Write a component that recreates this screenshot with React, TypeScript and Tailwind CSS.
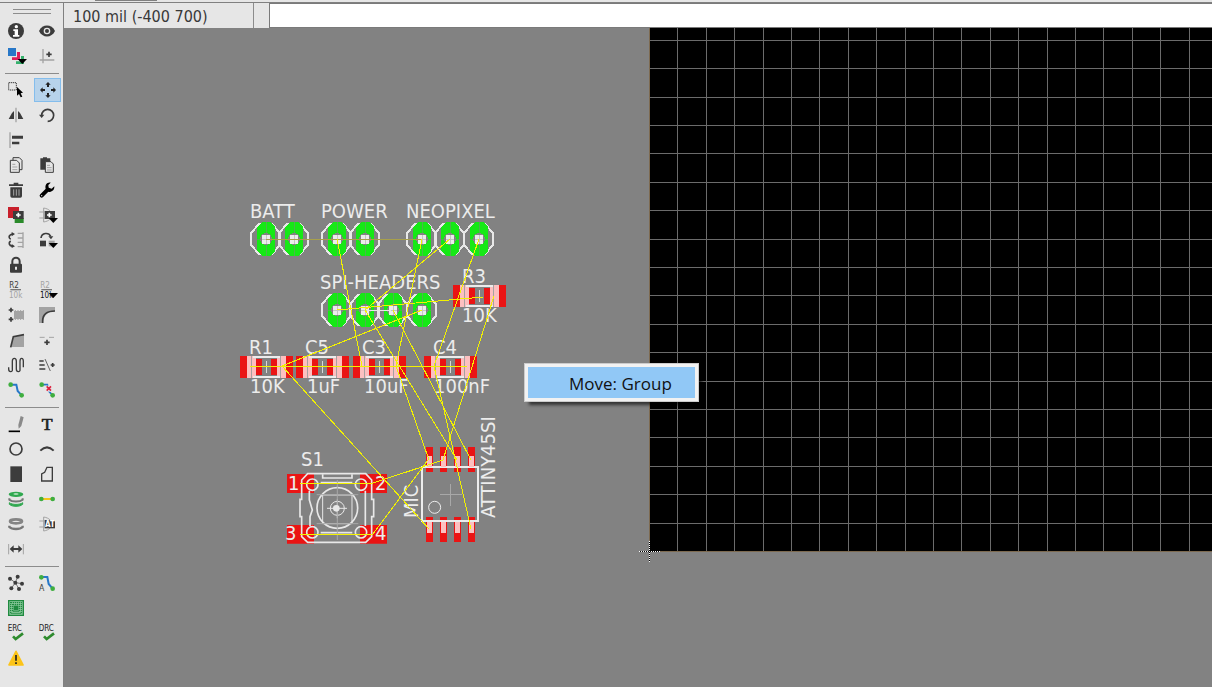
import React from "react";

type Tool = { name: string; art: React.ReactNode; active?: boolean };

const ink = "#3c3c3c";
const pale = "#a3a3a3";
const green = "#3fae3f";
const blue = "#2878c8";

const Plus = ({ x, y, s = 7, c = ink }: { x: number; y: number; s?: number; c?: string }) => (
  <path d={`M${x - s} ${y}h${s * 2}M${x} ${y - s}v${s * 2}`} stroke={c} strokeWidth="5" />
);
const Drop = () => <path d="M29 33H57L43 48Z" fill="#000" />;

const Gate = () => (
  <path d="M1 15H16M1 33H16M14 3V45M14 3C32 6 38 15 38 24S32 42 14 45" fill="none" stroke={pale} strokeWidth="3" />
);

const groupOne: Tool[] = [
  {
    name: "Info",
    art: (
      <>
        <circle cx="24" cy="24" r="24" fill={ink} />
        <circle cx="25" cy="11" r="5" fill="#fff" />
        <path d="M16 19H30V36H34V41H15V36H20V24H16Z" fill="#fff" />
      </>
    ),
  },
  {
    name: "Show",
    art: (
      <>
        <path d="M0 24C10 2 38 2 48 24C38 46 10 46 0 24Z" fill={ink} />
        <circle cx="24" cy="24" r="8" fill={ink} stroke="#e6e6e6" strokeWidth="4" />
      </>
    ),
  },
  {
    name: "Layers",
    art: (
      <>
        <path d="M0 0H24V24H0Z" fill={blue} />
        <path d="M27 12H36V36H12V28H27Z" fill="#dc1e5a" />
        <path d="M39 24H48V48H24V40H39Z" fill="#35b06c" />
        <Drop />
      </>
    ),
  },
  {
    name: "Mark",
    art: (
      <>
        <path d="M12 3V46M2 36H46" stroke={pale} strokeWidth="4" />
        <Plus x={30} y={19} s={8} />
      </>
    ),
  },
];

const groupTwo: (Tool | null)[] = [
  {
    name: "Group",
    art: (
      <>
        <path d="M2 2H25V24H2Z" fill="none" stroke={ink} strokeWidth="3" strokeDasharray="4 2" />
        <path d="M27 15L45 32L38 34L43 44L38 46L33 36L27 41Z" fill="#000" />
      </>
    ),
  },
  {
    name: "Move",
    active: true,
    art: (
      <g fill="#222">
        <path d="M24 0L32 8H27V15H21V8H16Z" />
        <path d="M24 48L32 40H27V33H21V40H16Z" />
        <path d="M0 24L8 16V21H15V27H8V32Z" />
        <path d="M48 24L40 16V21H33V27H40V32Z" />
      </g>
    ),
  },
  {
    name: "Mirror",
    art: (
      <>
        <path d="M24 2V46" stroke={pale} strokeWidth="4" />
        <path d="M2 36L12 18L18 12V36ZM46 36L36 18L30 12V36Z" fill={ink} />
      </>
    ),
  },
  {
    name: "Rotate",
    art: (
      <>
        <path d="M8 25A18 18 0 1 1 26 43" fill="none" stroke={ink} strokeWidth="5" />
        <path d="M0 23H16L8 33Z" fill={ink} />
      </>
    ),
  },
  {
    name: "Align",
    art: (
      <>
        <path d="M6 1V48" stroke={pale} strokeWidth="4" />
        <path d="M12 11H45V20H12ZM12 29H34V37H12Z" fill={ink} />
      </>
    ),
  },
  null,
  {
    name: "Copy",
    art: (
      <g fill="#e6e6e6" stroke={ink} strokeWidth="3">
        <path d="M15 2H34L42 10V38H15Z" />
        <path d="M7 10H26L34 18V46H7Z" />
        <path d="M13 22H22M13 30H28M13 38H28" stroke={pale} />
      </g>
    ),
  },
  {
    name: "Paste",
    art: (
      <>
        <path d="M4 4H12V1H24V4H34V38H4Z" fill={ink} />
        <path d="M19 14H36L43 21V46H19Z" fill="#e6e6e6" stroke={ink} strokeWidth="3" />
        <path d="M24 25H33M24 32H38M24 39H38" stroke={pale} strokeWidth="3" />
      </>
    ),
  },
  {
    name: "Delete",
    art: (
      <>
        <path d="M3 7H17V2H31V7H45V12H3ZM7 16H42V42Q42 47 37 47H12Q7 47 7 42Z" fill={ink} />
        <path d="M17 22V41M25 22V41M33 22V41" stroke={pale} strokeWidth="3" />
      </>
    ),
  },
  {
    name: "Change",
    art: (
      <>
        <path d="M8 41L26 23" stroke="#000" strokeWidth="12" strokeLinecap="round" />
        <path d="M35 2C24 0 17 9 20 20L28 29C38 32 47 24 46 13L38 20L29 17L28 9Z" fill="#000" />
        <circle cx="8" cy="41" r="2" fill="#e6e6e6" />
      </>
    ),
  },
  {
    name: "Add part",
    art: (
      <>
        <path d="M0 0H33V33H0Z" fill="#c8202c" />
        <path d="M20 33H47V48H20Z" fill="#2a8a2a" />
        <path d="M15 12H47V36H15Z" fill={ink} />
        <Plus x={31} y={24} c="#fff" />
      </>
    ),
  },
  {
    name: "Replace",
    art: (
      <>
        <Gate />
        <path d="M17 12H48V36H17Z" fill={ink} />
        <Plus x={31} y={24} c="#fff" />
        <Drop />
      </>
    ),
  },
  {
    name: "Pin swap",
    art: (
      <>
        <path d="M14 6C1 9 1 18 8 22M8 27C1 32 2 41 14 43" fill="none" stroke={ink} strokeWidth="5" />
        <path d="M11 0L21 6L11 13ZM11 36L21 43L11 48Z" fill={ink} />
        <path d="M29 4H45M29 18H45M29 31H45M29 44H45M45 1V48" stroke={pale} strokeWidth="4" />
      </>
    ),
  },
  {
    name: "Gate swap",
    art: (
      <>
        <path d="M6 18C8 2 29 0 35 13" fill="none" stroke={ink} strokeWidth="5" />
        <path d="M28 13H43L36 22Z" fill={ink} />
        <path d="M3 26H21V43H3Z" fill={ink} />
        <path d="M29 26H47V43H29Z" fill={pale} />
        <Drop />
      </>
    ),
  },
  {
    name: "Lock",
    art: (
      <>
        <path d="M13 22V13A11 11 0 0 1 35 13V22" fill="none" stroke={ink} strokeWidth="6" />
        <rect x="6" y="20" width="36" height="27" rx="3" fill={ink} />
        <path d="M24 29V38" stroke="#e6e6e6" strokeWidth="6" />
      </>
    ),
  },
  null,
  {
    name: "Name",
    art: (
      <>
        <text x="4" y="17" fontSize="24" fill={ink}>R2</text>
        <path d="M7 23H39" stroke="#777" strokeWidth="4" />
        <text x="3" y="47" fontSize="24" fill={pale}>10k</text>
      </>
    ),
  },
  {
    name: "Value",
    art: (
      <>
        <text x="4" y="17" fontSize="24" fill={pale}>R2</text>
        <path d="M7 23H39" stroke="#777" strokeWidth="4" />
        <text x="3" y="47" fontSize="24" fill="#111">10k</text>
        <Drop />
      </>
    ),
  },
  {
    name: "Smash",
    art: (
      <>
        <Plus x={9} y={9} />
        <Plus x={9} y={37} />
        <path d="M18 12H48V36H18Z" fill={pale} />
        <path d="M22 9V39M30 9V39M38 9V39M46 9V39" stroke={pale} strokeWidth="3" />
      </>
    ),
  },
  {
    name: "Miter",
    art: (
      <>
        <path d="M0 0H48V12C27 12 12 27 12 48H0Z" fill={pale} />
        <path d="M11 48V42C11 22 22 12 48 12" fill="none" stroke={ink} strokeWidth="5" />
      </>
    ),
  },
  {
    name: "Split",
    art: (
      <>
        <path d="M16 14L48 9V45H8Z" fill={pale} />
        <path d="M8 46L16 14L48 8" fill="none" stroke={ink} strokeWidth="5" />
      </>
    ),
  },
  {
    name: "Optimize",
    art: (
      <>
        <path d="M2 16H17M30 16H45" stroke={pale} strokeWidth="3" />
        <Plus x={24} y={31} s={8} />
      </>
    ),
  },
  {
    name: "Meander",
    art: (
      <path
        d="M2 31V36Q2 44 8 44T13 36V13Q13 4 19 4T25 13V36Q25 44 31 44T36 36V13Q36 4 41 4T46 13V31"
        fill="none"
        stroke={ink}
        strokeWidth="4"
      />
    ),
  },
  {
    name: "Reroute",
    art: (
      <>
        <path d="M1 12H14M1 24H17M1 36H19" stroke={ink} strokeWidth="4" />
        <path d="M18 6L34 42" stroke="#666" strokeWidth="3" />
        <Plus x={41} y={24} s={6} />
      </>
    ),
  },
  {
    name: "Route",
    art: (
      <>
        <path d="M8 8H25L29 27L41 40" fill="none" stroke={blue} strokeWidth="6" />
        <circle cx="8" cy="8" r="7" fill={green} />
        <circle cx="41" cy="40" r="7" fill={green} />
      </>
    ),
  },
  {
    name: "Ripup",
    art: (
      <>
        <path d="M8 8H25L29 27L41 40" fill="none" stroke={blue} strokeWidth="5" />
        <circle cx="8" cy="8" r="7" fill={green} />
        <circle cx="41" cy="40" r="7" fill={green} />
        <path d="M20 11H38V29H20Z" fill="#e6e6e6" />
        <path d="M23 13L36 26M36 13L23 26" stroke="#dc2040" strokeWidth="5" />
      </>
    ),
  },
];

const groupThree: (Tool | null)[] = [
  {
    name: "Line",
    art: (
      <>
        <path d="M2 46H36" stroke="#000" strokeWidth="5" />
        <path d="M38 0L47 4L40 30L32 38L31 27Z" fill="#8a8a8a" />
      </>
    ),
  },
  {
    name: "Text",
    art: <text x="8" y="42" fontSize="53" fill="#222" stroke="#222" strokeWidth="2" className="font-['Liberation_Serif',serif]">T</text>,
  },
  { name: "Circle", art: <circle cx="24" cy="24" r="18" fill="none" stroke={ink} strokeWidth="5" /> },
  { name: "Arc", art: <path d="M4 29Q24 9 44 29" fill="none" stroke={ink} strokeWidth="6" /> },
  { name: "Rectangle", art: <path d="M7 1H42V48H7Z" fill={ink} /> },
  { name: "Polygon", art: <path d="M8 45V24L17 19L24 4H40V45Z" fill="none" stroke={ink} strokeWidth="4" /> },
  {
    name: "Via",
    art: (
      <>
        <path d="M4 35V40C12 48 36 48 44 40V35C36 42 12 42 4 35Z" fill="#2fa84f" stroke="#2fa84f" strokeWidth="3" />
        <path d="M4 22V26C12 33 36 33 44 26V22" fill="none" stroke="#777" strokeWidth="6" />
        <ellipse cx="24" cy="10" rx="22" ry="8" fill="#2fa84f" />
        <ellipse cx="24" cy="9" rx="8" ry="2" fill="#d4eed8" />
      </>
    ),
  },
  {
    name: "Signal",
    art: (
      <>
        <path d="M7 24H41" stroke="#f5c518" strokeWidth="6" />
        <circle cx="7" cy="24" r="7" fill={green} />
        <circle cx="41" cy="24" r="7" fill={green} />
      </>
    ),
  },
  {
    name: "Hole",
    art: (
      <>
        <path d="M4 29V33C12 41 36 41 44 33V29" fill="none" stroke="#777" strokeWidth="7" />
        <ellipse cx="24" cy="16" rx="18" ry="6" fill="#e6e6e6" stroke="#858585" strokeWidth="8" />
      </>
    ),
  },
  {
    name: "Attribute",
    art: (
      <>
        <Gate />
        <path d="M17 12H48V37H17Z" fill={ink} />
        <text x="18" y="34" fontSize="24" fill="#fff" className="font-bold">AT</text>
      </>
    ),
  },
  {
    name: "Dimension",
    art: (
      <>
        <path d="M2 9V40M46 9V40" stroke={pale} strokeWidth="3" />
        <path d="M5 24L17 13V21H31V13L43 24L31 35V27H17V35Z" fill={ink} />
      </>
    ),
  },
  null,
];

const check = <path d="M15 34L23 42L45 25" fill="none" stroke="#2e8b2e" strokeWidth="8" />;

const groupFour: (Tool | null)[] = [
  {
    name: "Ratsnest",
    art: (
      <>
        <path d="M22 23L29 6M22 23L6 11M22 23L42 26M22 23L10 40M22 23L33 42" stroke="#777" strokeWidth="3" />
        <g fill={ink}>
          <circle cx="22" cy="23" r="6" />
          <circle cx="29" cy="5" r="6" />
          <circle cx="6" cy="11" r="6" />
          <circle cx="42" cy="26" r="6" />
          <circle cx="10" cy="40" r="6" />
          <circle cx="33" cy="42" r="6" />
        </g>
      </>
    ),
  },
  {
    name: "Autorouter",
    art: (
      <>
        <path d="M7 6H25L29 27L41 41" fill="none" stroke={blue} strokeWidth="6" />
        <circle cx="7" cy="7" r="7" fill={green} />
        <circle cx="41" cy="41" r="7" fill={green} />
        <text x="0" y="48" fontSize="26" fill={ink}>A</text>
      </>
    ),
  },
  {
    name: "Fusion sync",
    art: (
      <>
        <path d="M2 2H46V46H2Z" fill="#8fcba0" stroke="#1f8a3f" strokeWidth="4" />
        <path d="M8 8H40V40H8ZM14 14H34V34H14Z" fill="none" stroke="#1f8a3f" strokeWidth="4" strokeDasharray="4 2" />
        <path d="M17 17H31V31H17Z" fill="#1f8a3f" />
      </>
    ),
  },
  null,
  { name: "ERC", art: <><text x="-1" y="19" fontSize="24" fill="#222">ERC</text>{check}</> },
  { name: "DRC", art: <><text x="-1" y="19" fontSize="24" fill="#222">DRC</text>{check}</> },
  {
    name: "Errors",
    art: (
      <>
        <path d="M24 4L45 45H3Z" fill="#fcc419" stroke="#fcc419" strokeWidth="5" strokeLinejoin="round" />
        <path d="M24 15V32M24 37V42" stroke="#222" strokeWidth="5" />
      </>
    ),
  },
];

function ToolGroup({ tools }: { tools: (Tool | null)[] }) {
  return (
    <div className="grid grid-cols-[26px_27px] gap-x-[5px] gap-y-px">
      {tools.map((t, i) =>
        t ? (
          <button
            key={t.name}
            type="button"
            aria-label={t.name}
            className={
              t.active
                ? "flex h-6 items-center justify-center border border-[#84bdec] bg-[#b7d3eb] pl-px"
                : "flex h-6 w-[26px] items-center justify-center"
            }
          >
            <svg viewBox="0 0 48 48" className="size-4 overflow-visible font-['DejaVu_Sans_Condensed','DejaVu_Sans',sans-serif]">
              {t.art}
            </svg>
          </button>
        ) : (
          <span key={i} className="h-6" />
        )
      )}
    </div>
  );
}

const Rule = () => <hr className="mt-[5px] mb-1 ml-0.5 w-[54px] border-t border-[#8c8c8c]" />;

const headerPins: [number, number][] = [
  [266, 239], [294, 239], [337, 239], [365, 239], [422, 239], [450, 239], [479, 239],
  [337, 310], [365, 310], [393, 310], [422, 310],
];

const chips: [number, number][] = [[479, 296], [266, 367], [322, 367], [379, 367], [450, 367]];

const labels: [number, number, string][] = [
  [250, 218, "BATT"], [321, 218, "POWER"], [406, 218, "NEOPIXEL"], [320, 289, "SPI-HEADERS"],
  [462, 283, "R3"], [462, 322, "10K"], [249, 354, "R1"], [305, 354, "C5"], [362, 354, "C3"], [433, 354, "C4"],
  [250, 393, "10K"], [307, 393, "1uF"], [364, 393, "10uF"], [434, 393, "100nF"], [301, 466, "S1"],
  [288, 490, "1"], [375, 490, "2"], [285, 540, "3"], [375, 540, "4"],
];

const airwires =
  "M337 239L362 366M422 239L396 366L429 460M450 239L365 310L457 460M479 239L434 366L471 529" +
  "M393 310L471 460M494 296L443 460L373 483M337 310L483 297M422 310L282 366L429 529" +
  "M373 534L428 460M300 483H373M250 366H467M300 534H373";

function Board() {
  const columns = Array.from({ length: 120 }, (_, i) => Math.floor(649.6 + (i + 1) * 28.39));
  const rows = Array.from({ length: 18 }, (_, i) => Math.floor(551.4 - (i + 1) * 28.39));
  return (
    <svg className="block h-full w-full" aria-label="Board layout">
      <g transform="translate(-64 -28)">
        <g shapeRendering="crispEdges">
          <rect x="649" y="20" width="3400" height="531" fill="#000" stroke="#7d6a50" />
          {columns.map((x) => <rect key={x} x={x} y="28" width="1" height="523" fill="#6b6b6b" />)}
          {rows.map((y) => <rect key={y} x="650" y={y} width="3400" height="1" fill="#6b6b6b" />)}
          <path d="M639 551H660M649 541V562" stroke="#000" strokeWidth="1" />
          <path d="M639 551H660M649 541V562" stroke="#fff" strokeWidth="1" strokeDasharray="1 1" />
        </g>

        {headerPins.map(([x, y]) => (
          <g key={`${x}-${y}`} transform={`translate(${x} ${y})`} shapeRendering="crispEdges">
            <path d="M-15 -6L-7 -15H6L14 -6V6L6 15H-7L-15 6Z" fill="none" stroke="#e8e8e8" strokeWidth="2" />
            <path d="M-9 -12L-4 -17H4L9 -12V12L4 17H-4L-9 12Z" fill="#16e816" />
            <circle r="6" cx="0" cy="0" fill="#828282" />
            <path d="M-4 -4H4V5H-4Z" fill="#ececec" />
            <path d="M-13 0H-4M4 0H13M0 -17V-4M0 5V17" stroke="#828282" strokeOpacity="0.5" />
            <path d="M-4 0H4M0 -4V5" stroke="#828282" strokeOpacity="0.35" />
          </g>
        ))}
        <path d="M266 239H422" stroke="#a8a04a" shapeRendering="crispEdges" />
        <path d="M367 310H391" stroke="#e8e8e8" shapeRendering="crispEdges" />

        {chips.map(([x, y]) => (
          <g key={x} transform={`translate(${x} ${y})`} shapeRendering="crispEdges">
            <path d="M-26 -11H27V11H-26Z" fill="#ea1414" />
            <path d="M-19 -11H20V11H-19Z" fill="#fcc0c0" />
            <path d="M-10 -11H11V11H-10Z" fill="#828282" />
            <path d="M-13 -10H14M-13 10H14" stroke="#ececec" strokeWidth="2" />
            <path d="M-10 -8H11V8H-10Z" fill="#ea1414" />
            <path d="M-4 -8H5V8H-4Z" fill="#828282" />
            <path d="M-15 -11V11M14 -11V11" stroke="#a8a0a0" />
            <path d="M0 -6V6" stroke="#d8d8d8" />
          </g>
        ))}

        <g transform="translate(275 400) scale(0.3333)">
          <path d="M36 222H117V279H36ZM255 222H336V279H255ZM36 375H117V431H36ZM255 375H336V431H255Z" fill="#ea1414" />
          <g fill="none" stroke="#e8e8e8" strokeWidth="5">
            <path d="M80 240L98 221H272L290 240V298H296V350H290V410L272 427H98L80 410V350H75V298H80Z" />
            <circle cx="112" cy="254" r="17" />
            <circle cx="258" cy="254" r="17" />
            <circle cx="112" cy="397" r="17" />
            <circle cx="258" cy="397" r="17" />
            <circle cx="187" cy="324" r="61" />
            <circle cx="187" cy="325" r="21" strokeWidth="3" />
            <path d="M103 272V300L112 330L105 350V378M271 272V378M143 223V234H231V223M137 248H232M137 398H232" />
            <path d="M143 285H231V371H143Z" strokeWidth="3" />
            <path d="M156 325H216M187 298V355" strokeWidth="3" />
            <path d="M125 284H250M125 371H250M187 240V420" stroke="#a8a8a8" strokeWidth="3" />
          </g>
          <circle cx="184" cy="325" r="10" fill="#e8e8e8" />
          <g shapeRendering="crispEdges">
            <path d="M453 141H474V216H453ZM495 141H516V216H495ZM537 141H558V216H537ZM579 141H600V216H579ZM453 351H474V426H453ZM495 351H516V426H495ZM537 351H558V426H537ZM579 351H600V426H579Z" fill="#ea1414" />
            <path d="M440 201H610V364H440Z" fill="none" stroke="#ececec" strokeWidth="6" />
            <path d="M456 168H471V200H456ZM498 168H513V200H498ZM540 168H555V200H540ZM582 168H597V200H582ZM456 366H471V399H456ZM498 366H513V399H498ZM540 366H555V399H540ZM582 366H597V399H582Z" fill="#fcc0c0" />
            <path d="M496 284H560M526 252V318" stroke="#a8a8a8" strokeWidth="3" />
          </g>
          <circle cx="479" cy="322" r="18" fill="none" stroke="#ececec" strokeWidth="3" />
        </g>

        <g fill="#ececec" className="font-['DejaVu_Sans_Condensed','DejaVu_Sans',sans-serif] text-[20px]">
          {labels.map(([x, y, t]) => <text key={`${x}-${y}`} x={x} y={y}>{t}</text>)}
          <text transform="translate(495 518) rotate(-90)">ATTINY45SI</text>
          <text transform="translate(418 518) rotate(-90)">MIC</text>
        </g>

        <path d={airwires} fill="none" stroke="#f2f200" shapeRendering="crispEdges" />
      </g>
    </svg>
  );
}

export default function App() {
  return (
    <div className="flex h-screen flex-col overflow-hidden bg-[#e6e6e6] font-['DejaVu_Sans_Condensed','DejaVu_Sans',sans-serif]">
      <div className="h-[3px] shrink-0 border-b border-[#808080]">
        <div className="ml-[95px] h-px w-[62px] bg-[#808080]" />
      </div>
      <div className="flex min-h-0 flex-1">
        <nav aria-label="Tools" className="w-16 shrink-0 border-r border-[#808080] pl-[3px]">
          <div className="mt-1.5 mb-[5px] ml-2.5 h-[5px] w-[38px] border-y border-[#8c8c8c]" />
          <ToolGroup tools={groupOne} />
          <Rule />
          <ToolGroup tools={groupTwo} />
          <Rule />
          <ToolGroup tools={groupThree} />
          <Rule />
          <ToolGroup tools={groupFour} />
        </nav>
        <div className="flex min-w-0 flex-1 flex-col">
          <header className="flex h-[25px] shrink-0">
            <output className="w-[190px] border-r border-[#8c8c8c] pl-[9px] text-[16px] leading-[27px] whitespace-nowrap text-[#383838]">
              100 mil (-400 700)
            </output>
            <input
              type="text"
              aria-label="Command"
              className="ml-[15px] min-w-0 flex-1 border border-r-0 border-[#7a7a7a] bg-white px-2 outline-none"
            />
          </header>
          <main className="relative min-h-0 flex-1 overflow-hidden bg-[#828282]">
            <Board />
            <div
              role="menu"
              className="absolute top-[335px] left-[460px] w-[175px] border border-[#cccccc] bg-[#f2f2f2] p-[3px] shadow-[4px_4px_3px_-1px_rgba(0,0,0,0.6)]"
            >
              <button
                type="button"
                role="menuitem"
                className="block h-[31px] w-full bg-[#91c8f6] pl-[41px] text-left font-['Open_Sans','Noto_Sans',sans-serif] text-[17px] leading-[33px] whitespace-nowrap text-[#111]"
              >
                Move: Group
              </button>
            </div>
          </main>
        </div>
      </div>
    </div>
  );
}
